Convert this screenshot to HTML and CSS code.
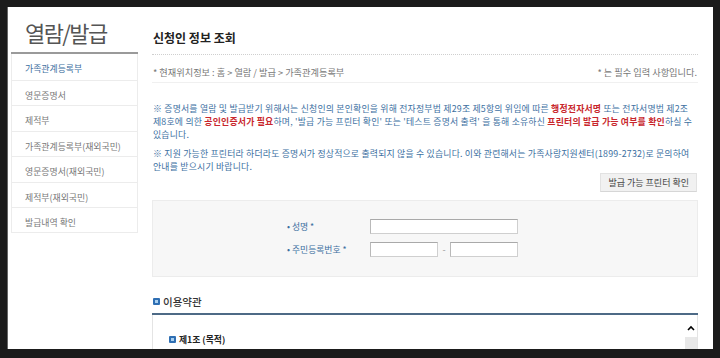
FILE: index.html
```html
<!DOCTYPE html>
<html>
<head>
  <title>열람/발급 - 신청인 정보 조회</title>
  <meta charset="utf-8">
  <link rel="stylesheet" href="styles.css">
</head>
<body>
  <div class="screen">
    <div class="page">
      <aside class="lnb">
        <h1>열람/발급</h1>
        <ul class="lnb-menu">
          <li class="on">가족관계등록부</li>
          <li>영문증명서</li>
          <li>제적부</li>
          <li>가족관계등록부(재외국민)</li>
          <li>영문증명서(재외국민)</li>
          <li>제적부(재외국민)</li>
          <li>발급내역 확인</li>
        </ul>
      </aside>
      <main class="content">
        <h2 class="page-title">신청인 정보 조회</h2>
        <div class="location">
          <span>* 현재위치정보 : 홈 &gt; 열람 / 발급 &gt; 가족관계등록부</span>
          <span>* 는 필수 입력 사항입니다.</span>
        </div>
        <div class="notice">
          <p>※ 증명서를 열람 및 발급받기 위해서는 신청인의 본인확인을 위해 전자정부법 제29조 제5항의 위임에 따른 <b>행정전자서명</b> 또는 전자서명법 제2조<br>제8호에 의한 <b>공인인증서가 필요</b>하며, '발급 가능 프린터 확인' 또는 '테스트 증명서 출력' 을 통해 소유하신 <b>프린터의 발급 가능 여부를 확인</b>하실 수<br>있습니다.</p>
          <p>※ 지원 가능한 프린터라 하더라도 증명서가 정상적으로 출력되지 않을 수 있습니다. 이와 관련해서는 가족사랑지원센터(1899-2732)로 문의하여<br>안내를 받으시기 바랍니다.</p>
        </div>
        <div class="btn-row">
          <button class="btn">발급 가능 프린터 확인</button>
        </div>
        <div class="form-box">
          <div class="form-row">
            <label for="name">• 성명 *</label>
            <input id="name" class="input-long" type="text">
          </div>
          <div class="form-row">
            <label for="jumin1">• 주민등록번호 *</label>
            <input id="jumin1" class="input-short" type="text">
            <span class="dash">-</span>
            <input id="jumin2" class="input-short" type="text">
          </div>
        </div>
        <h3 class="sub-title"><span class="bullet"></span>이용약관</h3>
        <div class="terms">
          <div class="terms-body">
            <h4><span class="bullet"></span>제1조 (목적)</h4>
          </div>
          <div class="scrollbar">
            <span class="arrow">
              <svg width="8" height="6" viewBox="0 0 8 6"><path d="M1 5 L4 2 L7 5" fill="none" stroke="#000" stroke-width="1.6"/></svg>
            </span>
            <span class="thumb"></span>
          </div>
        </div>
      </main>
    </div>
  </div>
</body>
</html>
```

FILE: styles.css
```css
body {
  margin: 0;
  padding: 0;
  background: #161616;
  font-family: "Noto Sans CJK KR", "Noto Sans", sans-serif;
}
.screen {
  width: 720px;
  height: 358px;
  padding: 7px 7px 9px 7px;
  box-sizing: border-box;
  background: #1b1b1b;
}
.page {
  height: 342px;
  background: #fff;
  display: flex;
  overflow: hidden;
  border-left: 1px solid #666;
  box-sizing: border-box;
}
.lnb {
  width: 127px;
  margin-left: 3px;
  flex-shrink: 0;
}
.lnb h1 {
  margin: 0;
  height: 47px;
  padding: 12px 0 0 14px;
  box-sizing: border-box;
  font-size: 22px;
  font-weight: 400;
  letter-spacing: -1.6px;
  color: #555;
  line-height: 26px;
  border-bottom: 2px solid #9a9a9a;
}
.lnb-menu {
  list-style: none;
  margin: 0;
  padding: 0;
  border: 1px solid #ececec;
  border-top: none;
}
.lnb-menu li {
  height: 25.4px;
  line-height: 21px;
  padding: 4px 0 0 13px;
  font-size: 8.9px;
  color: #777;
  border-top: 1px solid #ececec;
  box-sizing: border-box;
}
.lnb-menu li:first-child {
  border-top: none;
  height: 26px;
}
.lnb-menu li.on {
  color: #3d6e9e;
}
.content {
  flex: 1;
  margin-left: 14px;
  margin-right: 15px;
  font-size: 9.2px;
  color: #666;
}
.page-title {
  margin: 0;
  padding: 23px 0 0 1px;
  height: 48px;
  box-sizing: border-box;
  font-size: 12px;
  color: #222;
  line-height: 16px;
  border-bottom: 1px dotted #cfcfcf;
}
.location {
  display: flex;
  justify-content: space-between;
  height: 28px;
  padding: 5px 1px 0;
  box-sizing: border-box;
  line-height: 24px;
  border-bottom: 1px solid #f0f0f0;
  color: #777;
}
.notice {
  padding-top: 19px;
  color: #3c6f9f;
  font-size: 8.9px;
  letter-spacing: 0.2px;
  line-height: 13px;
}
.notice p {
  margin: 0 0 6px 1px;
}
.notice p:last-child {
  margin-bottom: 0;
}
.notice b {
  color: #c8262c;
}
.btn-row {
  display: flex;
  justify-content: flex-end;
  padding-right: 1px;
}
.btn {
  font-family: inherit;
  font-size: 9px;
  color: #444;
  background: #f1f1f1;
  border: 1px solid #e2e2e2;
  border-bottom-color: #d6d6d6;
  padding: 0 7px;
  height: 19px;
  cursor: pointer;
}
.form-box {
  margin-top: 8px;
  background: #f7f7f7;
  border: 1px solid #ececec;
  height: 77px;
  box-sizing: border-box;
  padding: 18px 0 0 134px;
  display: flex;
  flex-direction: column;
  gap: 9px;
}
.form-row {
  display: flex;
  align-items: center;
  height: 14px;
}
.form-row label {
  width: 83px;
  color: #3c6f9f;
  font-size: 8.8px;
}
.form-row input {
  height: 15px;
  box-sizing: border-box;
  border: 1px solid #cfcfcf;
  border-top-color: #a9a9a9;
  border-left-color: #b9b9b9;
  background: #fff;
  padding: 0;
  margin: 0;
}
.input-long {
  width: 148px;
}
.input-short {
  width: 68px;
}
.dash {
  width: 12px;
  text-align: center;
  color: #999;
}
.sub-title {
  margin: 15px 0 0 0;
  height: 23px;
  padding-bottom: 3px;
  box-sizing: border-box;
  display: flex;
  align-items: center;
  gap: 3px;
  font-size: 10.5px;
  font-weight: 500;
  color: #333;
  border-bottom: 2px solid #4d6a86;
}
.sub-title .bullet {
  margin-left: 1px;
}
.bullet {
  display: inline-block;
  width: 7px;
  height: 7px;
  background: #a9d0f0;
  border: 2px solid #2f6fb3;
  border-radius: 1px;
  box-sizing: border-box;
}
.terms {
  display: flex;
  height: 60px;
  border: 1px solid #e4e4e4;
  border-top: none;
}
.terms-body {
  flex: 1;
  padding: 18px 0 0 16px;
}
.terms-body h4 {
  margin: 0;
  display: flex;
  align-items: center;
  gap: 3px;
  font-size: 8.8px;
  font-weight: 700;
  color: #222;
}
.scrollbar {
  width: 12px;
  display: flex;
  flex-direction: column;
  align-items: center;
}
.arrow {
  height: 18px;
  display: flex;
  align-items: center;
  margin-top: 4px;
}
.thumb {
  width: 12px;
  flex: 1;
  background: #e8e8e8;
}
```
